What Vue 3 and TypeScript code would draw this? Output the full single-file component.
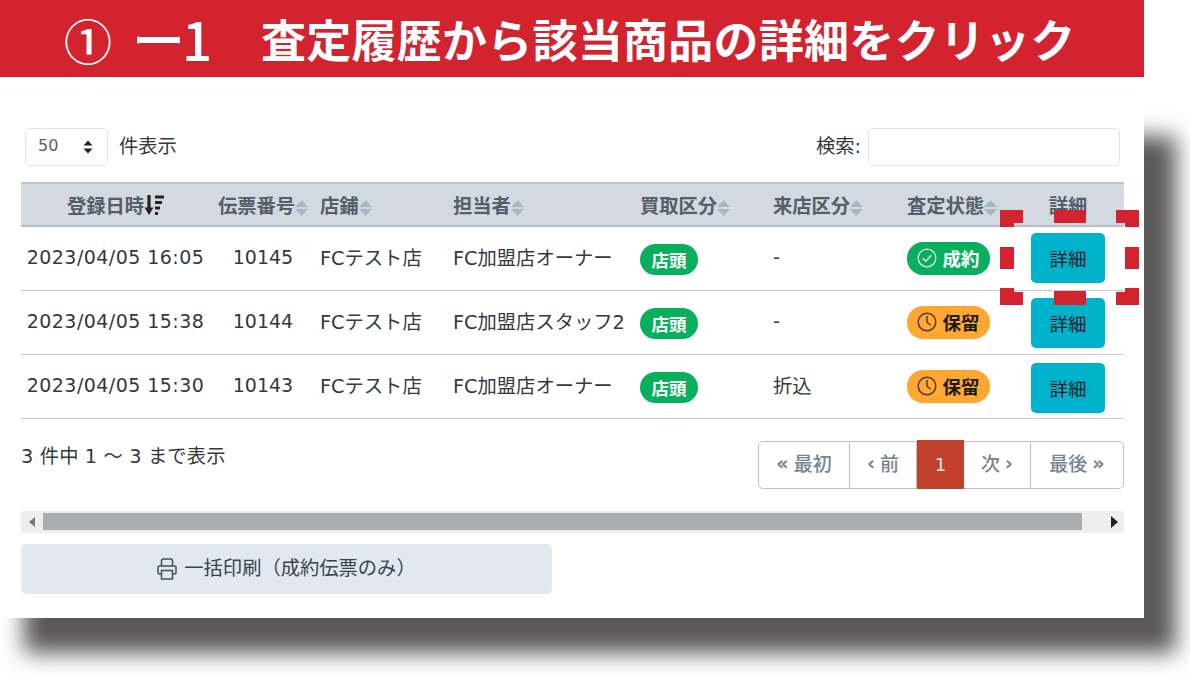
<script setup lang="ts">
interface Row { date: string; no: string; shop: string; staff: string; visit: string; status: 'ok' | 'hold' }
const rows: Row[] = [
  { date: '2023/04/05 16:05', no: '10145', shop: 'FCテスト店', staff: 'FC加盟店オーナー', visit: '-', status: 'ok' },
  { date: '2023/04/05 15:38', no: '10144', shop: 'FCテスト店', staff: 'FC加盟店スタッフ2', visit: '-', status: 'hold' },
  { date: '2023/04/05 15:30', no: '10143', shop: 'FCテスト店', staff: 'FC加盟店オーナー', visit: '折込', status: 'hold' },
]
const heads: { label: string; cls: string }[] = [
  { label: '伝票番号', cls: 'c' },
  { label: '店鋪', cls: '' },
  { label: '担当者', cls: '' },
  { label: '買取区分', cls: '' },
  { label: '来店区分', cls: '' },
  { label: '査定状態', cls: '' },
]
const marks: [number, number, number, number][] = [
  [1000, 210, 23, 13], [1000, 210, 14, 17], [1054, 210, 32, 13], [1116, 210, 23, 13], [1125, 210, 14, 17],
  [1000, 247, 14, 22], [1125, 247, 14, 22],
  [1000, 292, 23, 13], [1000, 288, 14, 17], [1054, 291, 32, 14], [1116, 292, 23, 13], [1125, 288, 14, 17],
]
</script>

<template>
  <div class="page">
    <div class="drop"></div>
    <div class="sheet">
      <header class="title">
        <span class="circle">①</span>
        <span class="dash">ー1</span>
        <span class="words">査定履歴から該当商品の詳細をクリック</span>
      </header>
      <main class="panel">
        <div class="controls">
          <div class="length">
            <div class="select">
              <span class="lift">50</span>
              <svg width="10" height="14" viewBox="0 0 10 14"><path d="M5 0.5 9.5 5.5H.5zM5 13.5.5 8.5H9.5z" fill="#222" /></svg>
            </div>
            <span class="lift">件表示</span>
          </div>
          <label class="search"><span class="lift">検索:</span><input type="text" /></label>
        </div>
        <table class="grid">
          <colgroup>
            <col class="w1" /><col class="w2" /><col class="w3" /><col class="w4" />
            <col class="w3" /><col class="w3b" /><col class="w5" /><col class="w6" />
          </colgroup>
          <thead>
            <tr>
              <th class="center0">
                登録日時<svg class="sorted" width="20" height="22" viewBox="0 0 20 22"><path d="M5 1v17" stroke="#222" stroke-width="3.2" /><path d="M0.5 13.5 5 21l4.500-7.500z" fill="#222" /><path d="M11 3h9M11 8.500h7M11 14h5M11 19.500h3" stroke="#222" stroke-width="3" /></svg>
              </th>
              <th v-for="h in heads" :key="h.label" :class="h.cls">
                {{ h.label }}<svg class="sort" width="13" height="16" viewBox="0 0 13 16"><path d="M6.5 0 13 7H0zM6.5 16 0 9H13z" fill="#a9b6bf" /></svg>
              </th>
              <th><span class="slot">詳細</span></th>
            </tr>
          </thead>
          <tbody>
            <tr v-for="r in rows" :key="r.no">
              <td class="center0 date t">{{ r.date }}</td>
              <td class="c num t">{{ r.no }}</td>
              <td class="t">{{ r.shop }}</td>
              <td class="t">{{ r.staff }}</td>
              <td><span class="pill narrow green">店頭</span></td>
              <td class="t">{{ r.visit }}</td>
              <td>
                <span v-if="r.status === 'ok'" class="pill wide green">
                  <svg width="20" height="20" viewBox="0 0 20 20" fill="none" stroke="#e6f5ec" stroke-width="1.3"><circle cx="10" cy="10" r="8.8" /><path d="M5.8 10.2l3 3 5.400-6" /></svg>
                  成約
                </span>
                <span v-else class="pill wide orange">
                  <svg width="20" height="20" viewBox="0 0 20 20" fill="none" stroke="#4b3410" stroke-width="1.4"><circle cx="10" cy="10" r="8.8" /><path d="M10 4v6.200l3.400 2.800" /></svg>
                  保留
                </span>
              </td>
              <td><button class="detail" type="button">詳細</button></td>
            </tr>
          </tbody>
        </table>
        <div class="foot">
          <div class="info">3 件中 1 〜 3 まで表示</div>
          <nav class="pager">
            <a class="p1 first"><b>«</b> <span class="lift">最初</span></a>
            <a class="p2"><b>‹</b> <span class="lift">前</span></a>
            <a class="p3 on">1</a>
            <a class="p2"><span class="lift">次</span> <b>›</b></a>
            <a class="p1"><span class="lift">最後</span> <b>»</b></a>
          </nav>
        </div>
        <div class="scroll">
          <svg class="arrow" width="7" height="10" viewBox="0 0 7 10"><path d="M6 0 0 5l6 5z" fill="#777" /></svg>
          <div class="thumb"></div>
          <svg class="arrow end" width="7" height="12" viewBox="0 0 7 12"><path d="M0 0 7 6 0 12z" fill="#222" /></svg>
        </div>
        <button class="print" type="button">
          <svg width="20" height="22" viewBox="0 0 20 22" fill="none" stroke="#444f59" stroke-width="1.5"><path d="M4.500 8V3a2 2 0 0 1 2-2h7a2 2 0 0 1 2 2v5" /><path d="M4.500 16H2.200A1.200 1.200 0 0 1 1 14.800V9.200A1.200 1.200 0 0 1 2.200 8h15.600A1.200 1.200 0 0 1 19 9.200v5.600a1.200 1.200 0 0 1-1.200 1.200h-2.300" /><path d="M4.500 12.500h11v8.500h-11z" /></svg>
          <span class="lift">一括印刷（成約伝票のみ）</span>
        </button>
      </main>
    </div>
    <svg class="frame" width="1190" height="675" viewBox="0 0 1190 675">
      <rect v-for="(m, i) in marks" :key="i" :x="m[0]" :y="m[1]" :width="m[2]" :height="m[3]" fill="#d2232e" />
    </svg>
  </div>
</template>

<style scoped>
.page {
  position: relative;
  width: 1190px;
  height: 675px;
  overflow: hidden;
  background: #fff;
  font-family: "DejaVu Sans", "Noto Sans CJK JP", sans-serif;
  font-size: 19.3px;
  color: #33393f;
}
.drop {
  position: absolute;
  left: 24px;
  top: 136px;
  width: 1152px;
  height: 517px;
  background: #5a5858;
  filter: blur(11px);
}
.sheet {
  position: relative;
  width: 1144px;
  height: 618px;
  background: #fff;
}
.title {
  height: 77px;
  box-sizing: border-box;
  padding-left: 64px;
  display: flex;
  align-items: center;
  background: #d2232e;
  color: #fff;
  font-family: "Noto Sans CJK JP", sans-serif;
  font-weight: 700;
  font-size: 45px;
  line-height: 1;
  white-space: nowrap;
}
.circle { width: 68px; font-weight: 500; font-size: 48px; }
.dash { width: 129px; font-size: 53px; font-weight: 500; letter-spacing: -3px; }
.words { letter-spacing: 0.25px; }
.lift { position: relative; top: -2px; }
.panel {
  box-sizing: border-box;
  height: 541px;
  padding: 51px 20px 0 21px;
}
.controls {
  display: flex;
  justify-content: space-between;
  align-items: center;
  height: 38px;
  padding: 0 4px;
}
.length { display: flex; align-items: center; gap: 11px; }
.select {
  box-sizing: border-box;
  width: 83px;
  height: 38px;
  display: flex;
  align-items: center;
  justify-content: space-between;
  padding: 0 14px 0 12px;
  border: 1.5px solid #dfe3ea;
  border-radius: 5px;
  color: #56616c;
  font-size: 16px;
}
.search { display: flex; align-items: center; gap: 7px; }
.search input {
  box-sizing: border-box;
  width: 252px;
  height: 38px;
  border: 1.5px solid #dfe3ea;
  border-radius: 5px;
  background: #fff;
  outline: none;
}
.grid {
  width: 1103px;
  margin-top: 16px;
  table-layout: fixed;
  border-collapse: collapse;
}
.w1 { width: 189px; }
.w2 { width: 102px; }
.w3 { width: 133px; }
.w3b { width: 134px; }
.w4 { width: 187px; }
.w5 { width: 124px; }
.w6 { width: 101px; }
th {
  height: 43px;
  box-sizing: border-box;
  padding: 0 0 0 8px;
  background: #d3d9e0;
  border-top: 2px solid #bcc4cc;
  border-bottom: 2px solid #b5bdc5;
  color: #545e69;
  font-size: 19.3px;
  font-weight: 700;
  text-align: left;
  white-space: nowrap;
}
td {
  height: 64px;
  box-sizing: border-box;
  padding: 0 0 0 8px;
  border-bottom: 1.5px solid #c4c9ce;
  white-space: nowrap;
}
td.t { padding-bottom: 2px; }
.center0 { padding-left: 0; text-align: center; }
.c { padding-left: 4px; text-align: center; }
.date { font-size: 19px; letter-spacing: 0.45px; }
.num { font-size: 19px; }
.sort, .sorted { vertical-align: -3px; }
.slot { display: inline-block; width: 74px; text-align: center; }
.pill {
  display: inline-flex;
  align-items: center;
  justify-content: center;
  gap: 5px;
  box-sizing: border-box;
  width: 58px;
  height: 31px;
  border-radius: 16px;
  font-size: 17.5px;
  font-weight: 700;
  vertical-align: middle;
}
.narrow { transform: translateY(1px); }
.wide { width: 83px; height: 33px; font-size: 18.5px; }
.green { background: #0aae5f; color: #fff; }
.orange { background: #ffa733; color: #1d1a12; }
.detail {
  display: block;
  width: 74px;
  height: 50px;
  padding: 0;
  border: none;
  border-radius: 5px;
  background: #00b3cc;
  color: #13202a;
  font: inherit;
  font-size: 18.500px;
}
tbody tr:nth-child(2) .detail { transform: translateY(1px); }
tbody tr:nth-child(3) .detail { transform: translateY(2px); }
.foot {
  display: flex;
  justify-content: space-between;
  margin-top: 22px;
  height: 48px;
}
.info { line-height: 32px; letter-spacing: 0.15px; }
.pager {
  display: flex;
  box-sizing: border-box;
  height: 48px;
  border: 1.5px solid #b8c4cc;
  border-radius: 5px;
  color: #77838f;
  font-size: 19px;
  font-weight: 500;
}
.pager b { font-weight: 700; position: relative; top: -2px; }
.pager a {
  display: flex;
  align-items: center;
  justify-content: center;
  gap: 5px;
  box-sizing: border-box;
  border-right: 1.5px solid #b8c4cc;
}
.pager a:last-child { border-right: none; }
.p1 { width: 92px; }
.pager .first { width: 91px; }
.p2 { width: 67px; }
.p3 { width: 47px; }
.pager .on {
  margin: -1.5px 0;
  border: none;
  background: #c0402c;
  color: #fbe9e4;
  font-size: 18px;
}
.scroll {
  display: flex;
  align-items: center;
  margin-top: 22px;
  width: 1103px;
  height: 22px;
  background: #eeeeee;
}
.arrow { margin-left: 8px; flex: none; }
.thumb { margin-left: 7px; width: 1039px; height: 17px; background: #acadaf; }
.arrow.end { margin-left: 29px; }
.print {
  display: flex;
  align-items: center;
  justify-content: center;
  gap: 7px;
  margin-top: 11px;
  width: 531px;
  height: 50px;
  padding: 0;
  border: none;
  border-radius: 5px;
  background: #e2e8ef;
  color: #39424b;
  font: inherit;
  font-size: 19.300px;
}
.frame {
  position: absolute;
  left: 0;
  top: 0;
  pointer-events: none;
}
</style>
